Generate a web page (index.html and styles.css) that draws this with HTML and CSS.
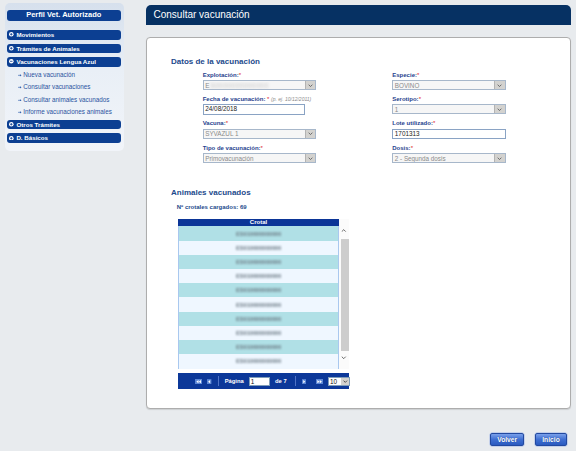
FILE: index.html
```html
<!DOCTYPE html>
<html lang="es">
<head>
<meta charset="utf-8">
<title>Consultar vacunación</title>
<link rel="stylesheet" href="styles.css">
</head>
<body>
<div class="page">
  <aside class="sidebar">
    <div class="side-title">Perfil Vet. Autorizado</div>
    <ul class="menu">
      <li class="menu-item"><svg class="toggle" viewBox="0 0 10 10"><circle cx="5" cy="5" r="5" fill="#fff"/><path d="M2.3 5h5.4M5 2.3v5.4" stroke="#0c3f92" stroke-width="1.8"/></svg>Movimientos</li>
      <li class="menu-item"><svg class="toggle" viewBox="0 0 10 10"><circle cx="5" cy="5" r="5" fill="#fff"/><path d="M2.3 5h5.4M5 2.3v5.4" stroke="#0c3f92" stroke-width="1.8"/></svg>Trámites de Animales</li>
      <li class="menu-item open"><svg class="toggle" viewBox="0 0 10 10"><circle cx="5" cy="5" r="5" fill="#fff"/><path d="M2.3 5h5.4" stroke="#0c3f92" stroke-width="1.8"/></svg>Vacunaciones Lengua Azul</li>
      <li class="sub-list">
        <ul class="subs">
          <li class="sub"><svg class="arr" viewBox="0 0 8 6"><path d="M0 3h5" stroke="#2b5cad" stroke-width="1.3"/><path d="M4.3 0.6L7.8 3L4.3 5.4z" fill="#2b5cad"/></svg>Nueva vacunación</li>
          <li class="sub"><svg class="arr" viewBox="0 0 8 6"><path d="M0 3h5" stroke="#2b5cad" stroke-width="1.3"/><path d="M4.3 0.6L7.8 3L4.3 5.4z" fill="#2b5cad"/></svg>Consultar vacunaciones</li>
          <li class="sub"><svg class="arr" viewBox="0 0 8 6"><path d="M0 3h5" stroke="#2b5cad" stroke-width="1.3"/><path d="M4.3 0.6L7.8 3L4.3 5.4z" fill="#2b5cad"/></svg>Consultar animales vacunados</li>
          <li class="sub"><svg class="arr" viewBox="0 0 8 6"><path d="M0 3h5" stroke="#2b5cad" stroke-width="1.3"/><path d="M4.3 0.6L7.8 3L4.3 5.4z" fill="#2b5cad"/></svg>Informe vacunaciones animales</li>
        </ul>
      </li>
      <li class="menu-item"><svg class="toggle" viewBox="0 0 10 10"><circle cx="5" cy="5" r="5" fill="#fff"/><path d="M2.3 5h5.4M5 2.3v5.4" stroke="#0c3f92" stroke-width="1.8"/></svg>Otros Trámites</li>
      <li class="menu-item last"><svg class="toggle" viewBox="0 0 10 10"><circle cx="5" cy="5" r="5" fill="#fff"/><path d="M2.3 5h5.4M5 2.3v5.4" stroke="#0c3f92" stroke-width="1.8"/></svg>D. Básicos</li>
    </ul>
  </aside>

  <main class="main">
    <div class="main-title">Consultar vacunación</div>
    <section class="box">
      <h2 class="sec-title">Datos de la vacunación</h2>
      <div class="form-grid">
        <div class="field">
          <div class="lbl">Explotación:<span class="req">*</span></div>
          <div class="sel"><span class="val">E<span class="blur-txt">S0000000000000</span></span><span class="drop"><svg viewBox="0 0 8 5"><path d="M1 1l3 3 3-3" fill="none" stroke="#555" stroke-width="1.3"/></svg></span></div>
        </div>
        <div class="field">
          <div class="lbl">Especie:<span class="req">*</span></div>
          <div class="sel"><span class="val">BOVINO</span><span class="drop"><svg viewBox="0 0 8 5"><path d="M1 1l3 3 3-3" fill="none" stroke="#555" stroke-width="1.3"/></svg></span></div>
        </div>
        <div class="field">
          <div class="lbl">Fecha de vacunación: <span class="req">*</span> <span class="hint">(p. ej. 10/12/2011)</span></div>
          <div class="inp short">24/08/2018</div>
        </div>
        <div class="field">
          <div class="lbl">Serotipo:<span class="req">*</span></div>
          <div class="sel"><span class="val">1</span><span class="drop"><svg viewBox="0 0 8 5"><path d="M1 1l3 3 3-3" fill="none" stroke="#555" stroke-width="1.3"/></svg></span></div>
        </div>
        <div class="field">
          <div class="lbl">Vacuna:<span class="req">*</span></div>
          <div class="sel"><span class="val">SYVAZUL 1</span><span class="drop"><svg viewBox="0 0 8 5"><path d="M1 1l3 3 3-3" fill="none" stroke="#555" stroke-width="1.3"/></svg></span></div>
        </div>
        <div class="field">
          <div class="lbl">Lote utilizado:<span class="req">*</span></div>
          <div class="inp">1701313</div>
        </div>
        <div class="field">
          <div class="lbl">Tipo de vacunación:<span class="req">*</span></div>
          <div class="sel"><span class="val">Primovacunación</span><span class="drop"><svg viewBox="0 0 8 5"><path d="M1 1l3 3 3-3" fill="none" stroke="#555" stroke-width="1.3"/></svg></span></div>
        </div>
        <div class="field">
          <div class="lbl">Dosis:<span class="req">*</span></div>
          <div class="sel"><span class="val">2 - Segunda dosis</span><span class="drop"><svg viewBox="0 0 8 5"><path d="M1 1l3 3 3-3" fill="none" stroke="#555" stroke-width="1.3"/></svg></span></div>
        </div>
      </div>

      <h2 class="sec-title animals">Animales vacunados</h2>
      <div class="count">Nº crotales cargados: 69</div>

      <div class="grid">
        <div class="grid-body">
          <div class="table">
            <div class="th">Crotal</div>
            <div class="row odd"><span class="blur-num">ES010000000000</span></div>
            <div class="row"><span class="blur-num">ES010000000000</span></div>
            <div class="row odd"><span class="blur-num">ES010000000000</span></div>
            <div class="row"><span class="blur-num">ES010000000000</span></div>
            <div class="row odd"><span class="blur-num">ES010000000000</span></div>
            <div class="row"><span class="blur-num">ES010000000000</span></div>
            <div class="row odd"><span class="blur-num">ES010000000000</span></div>
            <div class="row"><span class="blur-num">ES010000000000</span></div>
            <div class="row odd"><span class="blur-num">ES010000000000</span></div>
            <div class="row"><span class="blur-num">ES010000000000</span></div>
          </div>
          <div class="scroll">
            <svg class="chev" viewBox="0 0 8 5"><path d="M1 4l3-3 3 3" fill="none" stroke="#444" stroke-width="1.2"/></svg>
            <div class="thumb"></div>
            <svg class="chev" viewBox="0 0 8 5"><path d="M1 1l3 3 3-3" fill="none" stroke="#444" stroke-width="1.2"/></svg>
          </div>
        </div>
        <div class="pager">
          <svg class="pbtn dbl" viewBox="0 0 11 8"><rect width="11" height="8" fill="#5b86d4"/><path d="M5.3 1.5L2 4l3.3 2.5zM9 1.5L5.7 4 9 6.5z" fill="#fff"/></svg>
          <svg class="pbtn sgl prev" viewBox="0 0 7 8"><rect width="7" height="8" fill="#5b86d4"/><path d="M5 1.5L1.8 4 5 6.5z" fill="#fff"/></svg>
          <span class="psep"></span>
          <span class="ptxt">Página</span>
          <span class="pinp">1</span>
          <span class="ptxt de">de 7</span>
          <span class="psep"></span>
          <svg class="pbtn sgl next" viewBox="0 0 7 8"><rect width="7" height="8" fill="#5b86d4"/><path d="M2 1.5L5.2 4 2 6.5z" fill="#fff"/></svg>
          <svg class="pbtn dbl last" viewBox="0 0 11 8"><rect width="11" height="8" fill="#5b86d4"/><path d="M2 1.5L5.3 4 2 6.5zM5.7 1.5L9 4 5.7 6.5z" fill="#fff"/></svg>
          <span class="psel"><span class="psel-val">10</span><span class="psel-drop"><svg viewBox="0 0 8 5"><path d="M1 1l3 3 3-3" fill="none" stroke="#333" stroke-width="1.4"/></svg></span></span>
        </div>
      </div>
    </section>
    <div class="actions">
      <button class="btn">Volver</button>
      <button class="btn">Inicio</button>
    </div>
  </main>
</div>
</body>
</html>
```

FILE: styles.css
```css
* { box-sizing: border-box; margin: 0; padding: 0; }
html, body { width: 576px; height: 451px; overflow: hidden; }
body {
  background: #e8ebee;
  font-family: "Liberation Sans", Arial, sans-serif;
  color: #222;
}
.page {
  display: flex;
  align-items: flex-start;
  padding: 0 5px;
}

/* Sidebar */
.sidebar {
  width: 119px;
  margin-top: 3px;
  padding: 7px 3.5px 8px 2px;
  border-radius: 5px;
  background: linear-gradient(#d6e0ed, #e9eff6 45%, #f1f4f9);
}
.side-title {
  height: 10.5px;
  line-height: 10.5px;
  background: #0c3f92;
  color: #fff;
  font-weight: bold;
  font-size: 7.5px;
  text-align: center;
  border-radius: 3px;
}
.menu {
  list-style: none;
  margin-top: 9.5px;
  display: flex;
  flex-direction: column;
}
.menu-item {
  height: 9.5px;
  background: #0c3f92;
  color: #fff;
  font-weight: bold;
  font-size: 6.2px;
  border-radius: 3px;
  display: flex;
  align-items: center;
  padding-left: 2px;
  margin-bottom: 4px;
  white-space: nowrap;
}
.menu-item.open { margin-bottom: 2px; }
.menu-item.last { margin-bottom: 0; }
.toggle {
  width: 4.6px;
  height: 4.6px;
  margin-right: 2.8px;
  flex: none;
}
.sub-list { margin-bottom: 2px; }
.subs { list-style: none; }
.sub {
  height: 12.3px;
  display: flex;
  align-items: center;
  padding-left: 11px;
  font-size: 6.3px;
  color: #2a53a0;
  white-space: nowrap;
}
.arr {
  width: 3.6px;
  height: 2.7px;
  margin-right: 1.7px;
  margin-top: 1.6px;
  flex: none;
}

/* Main */
.main {
  margin-left: 21.5px;
  margin-top: 5px;
  width: 425.5px;
}
.main-title {
  height: 20px;
  line-height: 20px;
  background: #063163;
  color: #fff;
  font-size: 10px;
  padding-left: 8px;
  border-radius: 5px 5px 0 0;
}
.box {
  margin-top: 11.7px;
  height: 372.6px;
  background: #fff;
  border: 1px solid #adadad;
  border-radius: 4px;
  box-shadow: 0 1px 1px rgba(0,0,0,0.12);
  padding: 19px 0 0 24.5px;
}
.sec-title {
  font-size: 8px;
  line-height: 10px;
  font-weight: bold;
  color: #1d4a8c;
}
.form-grid {
  margin-top: 5px;
  margin-left: 31.7px;
  display: grid;
  grid-template-columns: 189.6px 113.4px;
  row-gap: 5.5px;
}
.field {
  display: flex;
  flex-direction: column;
  gap: 1.5px;
}
.lbl {
  font-size: 6px;
  line-height: 7px;
  font-weight: bold;
  color: #1f3f8e;
  white-space: nowrap;
}
.req {
  color: #e0141e;
  font-weight: normal;
}
.hint {
  font-size: 5px;
  font-style: italic;
  font-weight: normal;
  color: #8a8a8a;
}
.sel {
  width: 113.3px;
  height: 10px;
  border: 1px solid #a7b7ca;
  background: #f6f6f6;
  display: flex;
  align-items: center;
}
.val {
  flex: 1;
  font-size: 6.3px;
  color: #8a8a8a;
  padding-left: 1.5px;
  white-space: nowrap;
  overflow: hidden;
}
.blur-txt {
  color: #c4c4c4;
  filter: blur(1.4px);
  letter-spacing: 0.6px;
  margin-left: 1px;
}
.drop {
  width: 10.3px;
  height: 100%;
  background: #d3d2cf;
  border-left: 1px solid #b3b3b3;
  display: flex;
  align-items: center;
  justify-content: center;
}
.drop svg { width: 5px; height: 3.2px; }
.inp {
  width: 113.4px;
  height: 10.5px;
  border: 1px solid #8aa3c4;
  background: #fff;
  font-size: 6.4px;
  line-height: 8.5px;
  padding-left: 1.5px;
  color: #222;
}
.inp.short { width: 102px; }

.sec-title.animals { margin-top: 25.3px; }
.count {
  margin-top: 5.4px;
  margin-left: 5.7px;
  font-size: 6px;
  line-height: 7px;
  font-weight: bold;
  color: #1d4a8c;
}

/* Grid */
.grid {
  margin-top: 8.6px;
  margin-left: 7.3px;
  width: 170.7px;
}
.grid-body {
  display: flex;
  height: 150px;
}
.table {
  width: 160.7px;
  display: flex;
  flex-direction: column;
  border: 1px solid #a9c8ef;
  border-top: 0;
}
.th {
  height: 7px;
  line-height: 7px;
  background: #0b3597;
  color: #fff;
  font-size: 6px;
  font-weight: bold;
  text-align: center;
  margin: 0 -1px;
}
.row {
  flex: 1;
  background: #eff7ff;
  display: flex;
  align-items: center;
  justify-content: center;
}
.row.odd { background: #b0e0e6; }
.blur-num {
  font-size: 5.8px;
  font-weight: bold;
  color: #6c7a84;
  filter: blur(1px);
  letter-spacing: -0.1px;
}
.scroll {
  width: 10.3px;
  background: #fbfbfb;
  display: flex;
  flex-direction: column;
  align-items: center;
  padding-top: 9.4px;
}
.chev { width: 5.5px; height: 3.3px; flex: none; }
.thumb {
  align-self: flex-end;
  width: 8px;
  height: 112.6px;
  margin: 6.7px 0 4.5px;
  background: #cdcdcd;
}

.pager {
  margin-top: 3.7px;
  height: 16.3px;
  background: #0c3899;
  display: flex;
  align-items: center;
  padding-left: 16.7px;
  white-space: nowrap;
}
.pbtn { height: 5.3px; flex: none; }
.pbtn.dbl { width: 7.3px; }
.pbtn.sgl { width: 4.4px; }
.pbtn.prev { margin-left: 5px; }
.pbtn.next { margin-left: 6.4px; }
.pbtn.last { margin-left: 9.4px; }
.psep {
  width: 1px;
  height: 10px;
  background: #4f73c6;
  margin-left: 6.6px;
  flex: none;
}
.ptxt {
  color: #fff;
  font-size: 5.8px;
  font-weight: bold;
  margin-left: 5.4px;
  white-space: nowrap;
  flex: none;
}
.pinp {
  width: 21px;
  height: 9px;
  background: #fff;
  border: 1px solid #7f9db9;
  font-size: 6.4px;
  line-height: 7px;
  padding-left: 1px;
  margin-left: 5px;
  color: #111;
  flex: none;
}
.ptxt.de { margin-left: 5.4px; margin-right: 1.3px; }
.psel {
  width: 22.3px;
  height: 9px;
  margin-left: 5px;
  background: #fff;
  border: 1px solid #7f9db9;
  display: flex;
  align-items: center;
  flex: none;
}
.psel-val {
  flex: 1;
  font-size: 6.4px;
  color: #111;
  padding-left: 1px;
}
.psel-drop {
  width: 8px;
  height: 100%;
  background: #d3d2cf;
  display: flex;
  align-items: center;
  justify-content: center;
}
.psel-drop svg { width: 4.6px; height: 3px; }

/* Buttons */
.actions {
  display: flex;
  justify-content: flex-end;
  gap: 10.7px;
  margin-top: 24px;
  padding-right: 4px;
}
.btn {
  height: 12.7px;
  border: 1px solid #2249a0;
  border-radius: 2px;
  background: linear-gradient(#7aa0ea, #3f6fd2 50%, #2b5bc0);
  color: #fff;
  font-family: "Liberation Sans", Arial, sans-serif;
  font-size: 6.7px;
  font-weight: bold;
  text-shadow: 0 0 1px #123a8a;
  box-shadow: 0 0 0 0.5px #9fb6e6;
}
.btn:first-child { width: 34.3px; }
.btn:last-child { width: 32px; }
```
